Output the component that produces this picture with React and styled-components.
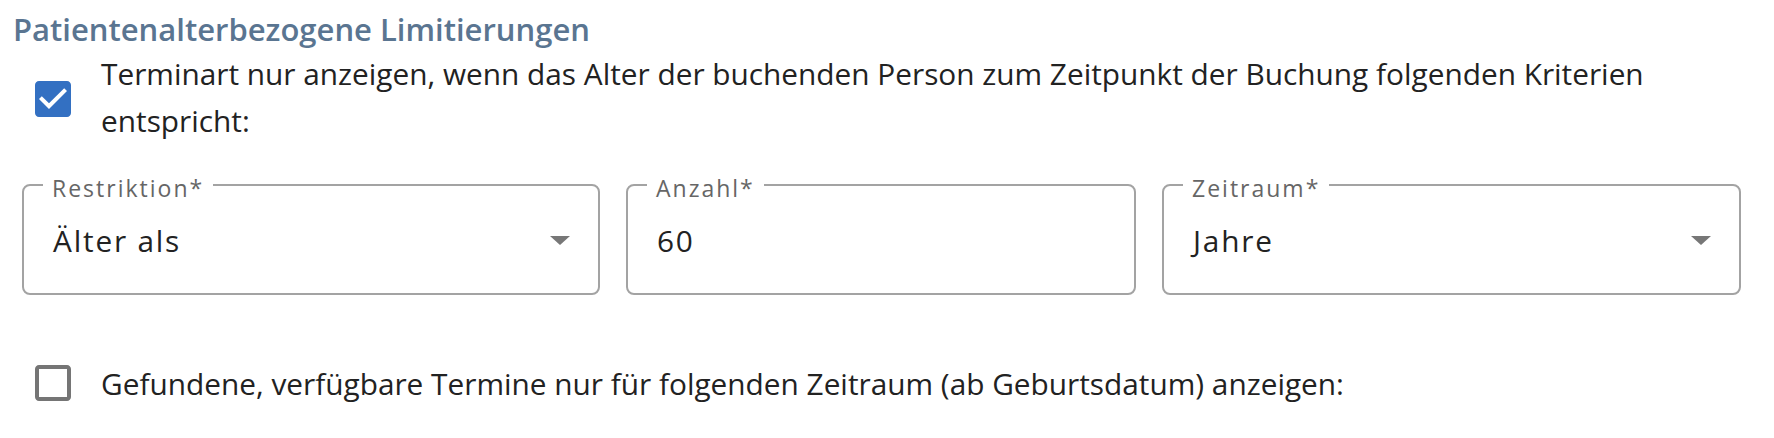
import React from "react";
import styled, { createGlobalStyle } from "styled-components";

const GlobalStyle = createGlobalStyle`
   html, body {
      margin: 0;
      padding: 0;
      background: #ffffff;
   }
   body {
      font-family: "Open Sans", "Noto Sans", "Liberation Sans", sans-serif;
      color: #222222;
   }
`;

const Page = styled.div`
   width: 1774px;
   height: 438px;
   box-sizing: border-box;
   padding: 8px 0 0 13px;
`;

const Heading = styled.h3`
   margin: 0;
   font-size: 31px;
   font-weight: 600;
   line-height: 42px;
   color: #5a7591;
`;

const CheckRow = styled.label`
   display: flex;
   align-items: center;
   gap: 24px;
   padding-left: 16px;
   margin-top: ${(props) => props.$top || 0}px;
`;

const Box = styled.svg`
   flex: none;
   width: 48px;
   height: 48px;
   margin-top: ${(props) => props.$shift || 0}px;
   fill: ${(props) => (props.$checked ? "#3370c2" : "#757575")};
`;

const CheckText = styled.span`
   font-size: 29.8px;
   line-height: 47px;
   color: #222222;
`;

const Fields = styled.div`
   display: grid;
   grid-template-columns: 578px 510px 579px;
   column-gap: 26px;
   margin: 26px 0 0 9px;
`;

const Field = styled.fieldset`
   margin: 0;
   padding: 0 28px 30px 19px;
   border: 2px solid #a3a3a3;
   border-radius: 8px;
   min-width: 0;
`;

const Legend = styled.legend`
   padding: 6px 9px 0;
   font-size: 23px;
   line-height: 24px;
   letter-spacing: 2px;
   color: #666666;
`;

const Value = styled.div`
   display: flex;
   align-items: center;
   justify-content: space-between;
   height: 46px;
   margin-top: 17px;
   padding-left: 10px;
   font-size: 29.8px;
   letter-spacing: 1.8px;
   color: #222222;
`;

const Arrow = styled.span`
   width: 0;
   height: 0;
   border-left: 10px solid transparent;
   border-right: 10px solid transparent;
   border-top: 9px solid #777777;
`;

const CheckIcon = ({ checked, shift }) => (
   <Box viewBox="0 0 24 24" $checked={checked} $shift={shift}>
      {checked ? (
         <>
            <rect x="4" y="4" width="16" height="16" fill="#ffffff" />
            <path d="M19 3H5c-1.11 0-2 .9-2 2v14c0 1.1.89 2 2 2h14c1.11 0 2-.9 2-2V5c0-1.1-.89-2-2-2zm-9 14l-5-5 1.41-1.41L10 14.17l7.59-7.59L19 8l-9 9z" />
         </>
      ) : (
         <path d="M19 5v14H5V5h14m0-2H5c-1.1 0-2 .9-2 2v14c0 1.1.9 2 2 2h14c1.1 0 2-.9 2-2V5c0-1.1-.9-2-2-2z" />
      )}
   </Box>
);

const fields = [
   { label: "Restriktion*", value: "Älter als", select: true },
   { label: "Anzahl*", value: "60", select: false },
   { label: "Zeitraum*", value: "Jahre", select: true },
];

const App = () => {
   return (
      <Page>
         <GlobalStyle />
         <Heading>Patientenalterbezogene Limitierungen</Heading>
         <CheckRow>
            <CheckIcon checked shift={4} />
            <CheckText>
               Terminart nur anzeigen, wenn das Alter der buchenden Person zum
               Zeitpunkt der Buchung folgenden Kriterien
               <br />
               entspricht:
            </CheckText>
         </CheckRow>
         <Fields>
            {fields.map((f) => (
               <Field key={f.label}>
                  <Legend>{f.label}</Legend>
                  <Value>
                     <span>{f.value}</span>
                     {f.select && <Arrow />}
                  </Value>
               </Field>
            ))}
         </Fields>
         <CheckRow $top={64}>
            <CheckIcon />
            <CheckText>
               Gefundene, verfügbare Termine nur für folgenden Zeitraum (ab
               Geburtsdatum) anzeigen:
            </CheckText>
         </CheckRow>
      </Page>
   );
};

export default App;
